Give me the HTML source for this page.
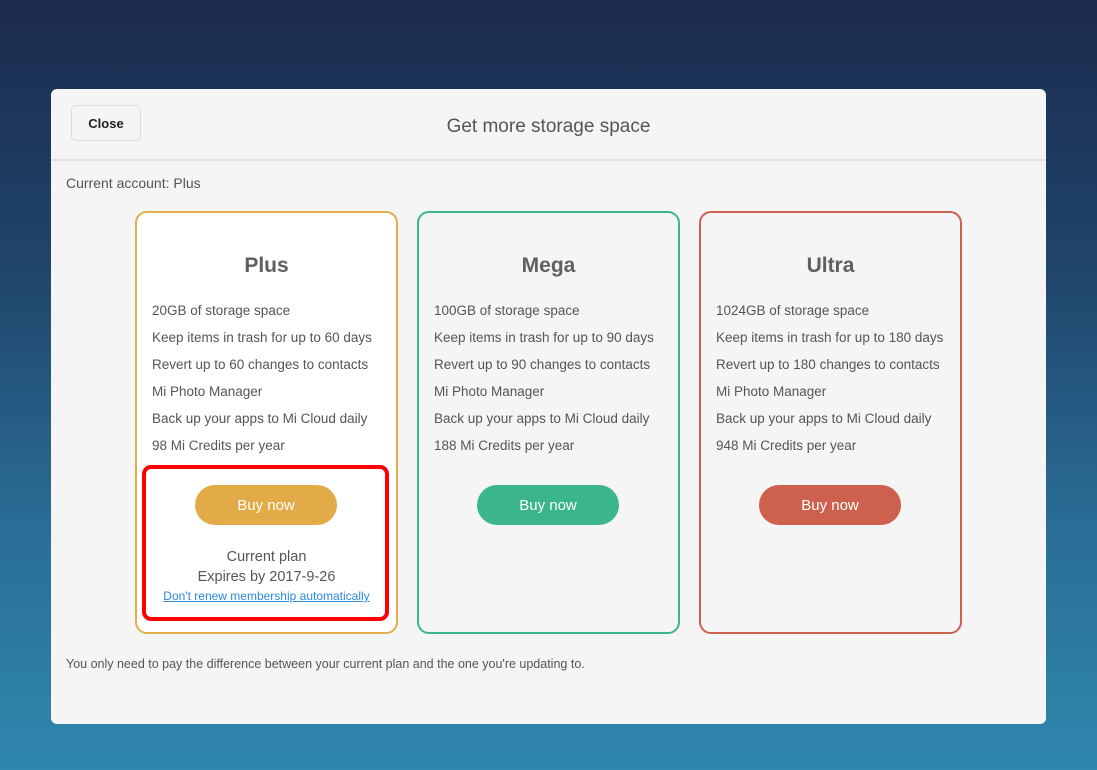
<!DOCTYPE html>
<html><head><meta charset="utf-8"><style>
*{box-sizing:border-box;margin:0;padding:0}
body{width:1097px;height:770px;overflow:hidden;background:linear-gradient(180deg,#1b2a4d 0%,#20456b 35%,#2a6f98 70%,#2f87ad 100%);font-family:"Liberation Sans",sans-serif;position:relative}
.modal{position:absolute;left:51px;top:89px;width:995px;height:635px;background:#f5f5f5;border-radius:6px}
.close{position:absolute;left:20px;top:16px;width:70px;height:36px;border:1px solid #ddd;border-radius:5px;background:#f5f5f5;font-weight:bold;font-size:13px;color:#222;text-align:center;line-height:36px}
.title{position:absolute;left:0;right:0;top:27px;text-align:center;font-size:19px;color:#555}
.hr{position:absolute;left:0;right:0;top:70px;height:2px;background:#e2e2e2}
.acct{position:absolute;left:15px;top:86px;font-size:14px;color:#555}
.card{position:absolute;top:122px;width:263px;height:423px;border:2px solid;border-radius:12px;background:#f5f5f5}
.card h2{position:absolute;top:41px;left:0;right:0;text-align:center;font-size:21px;color:#5f5f5f;font-weight:bold}
.card ul{position:absolute;top:90px;left:15px;list-style:none;font-size:13.5px;color:#555}
.card li{height:27px}
.btn{position:absolute;top:272px;left:58px;width:142px;height:40px;border-radius:20px;color:#fff;font-size:15px;text-align:center;line-height:42px}
.cur{position:absolute;top:334px;left:0;right:0;text-align:center;font-size:14.5px;color:#555;line-height:20px}
.link{position:absolute;top:376px;left:0;right:0;text-align:center;font-size:12px;color:#2a8ae0;text-decoration:underline}
.red{position:absolute;left:142px;top:465px;width:247px;height:156px;border:4px solid #f00;border-radius:9px}
.foot{position:absolute;left:15px;top:568px;font-size:12.5px;color:#555}
</style></head><body>
<div class="modal">
<div class="close">Close</div>
<div class="title">Get more storage space</div>
<div class="hr"></div>
<div class="acct">Current account: Plus</div>
<div class="card" style="left:84px;border-color:#e5ac4a;background:#fff">
<h2>Plus</h2>
<ul><li>20GB of storage space</li><li>Keep items in trash for up to 60 days</li><li>Revert up to 60 changes to contacts</li><li>Mi Photo Manager</li><li>Back up your apps to Mi Cloud daily</li><li>98 Mi Credits per year</li></ul>
<div class="btn" style="background:#e3ab48">Buy now</div>
<div class="cur">Current plan<br>Expires by 2017-9-26</div>
<div class="link">Don't renew membership automatically</div>
</div>
<div class="card" style="left:366px;border-color:#3db68b">
<h2>Mega</h2>
<ul><li>100GB of storage space</li><li>Keep items in trash for up to 90 days</li><li>Revert up to 90 changes to contacts</li><li>Mi Photo Manager</li><li>Back up your apps to Mi Cloud daily</li><li>188 Mi Credits per year</li></ul>
<div class="btn" style="background:#3bb68a">Buy now</div>
</div>
<div class="card" style="left:648px;border-color:#cd6150">
<h2>Ultra</h2>
<ul><li>1024GB of storage space</li><li>Keep items in trash for up to 180 days</li><li>Revert up to 180 changes to contacts</li><li>Mi Photo Manager</li><li>Back up your apps to Mi Cloud daily</li><li>948 Mi Credits per year</li></ul>
<div class="btn" style="background:#cd614d">Buy now</div>
</div>
<div class="foot">You only need to pay the difference between your current plan and the one you're updating to.</div>
</div>
<div class="red"></div>
</body></html>
